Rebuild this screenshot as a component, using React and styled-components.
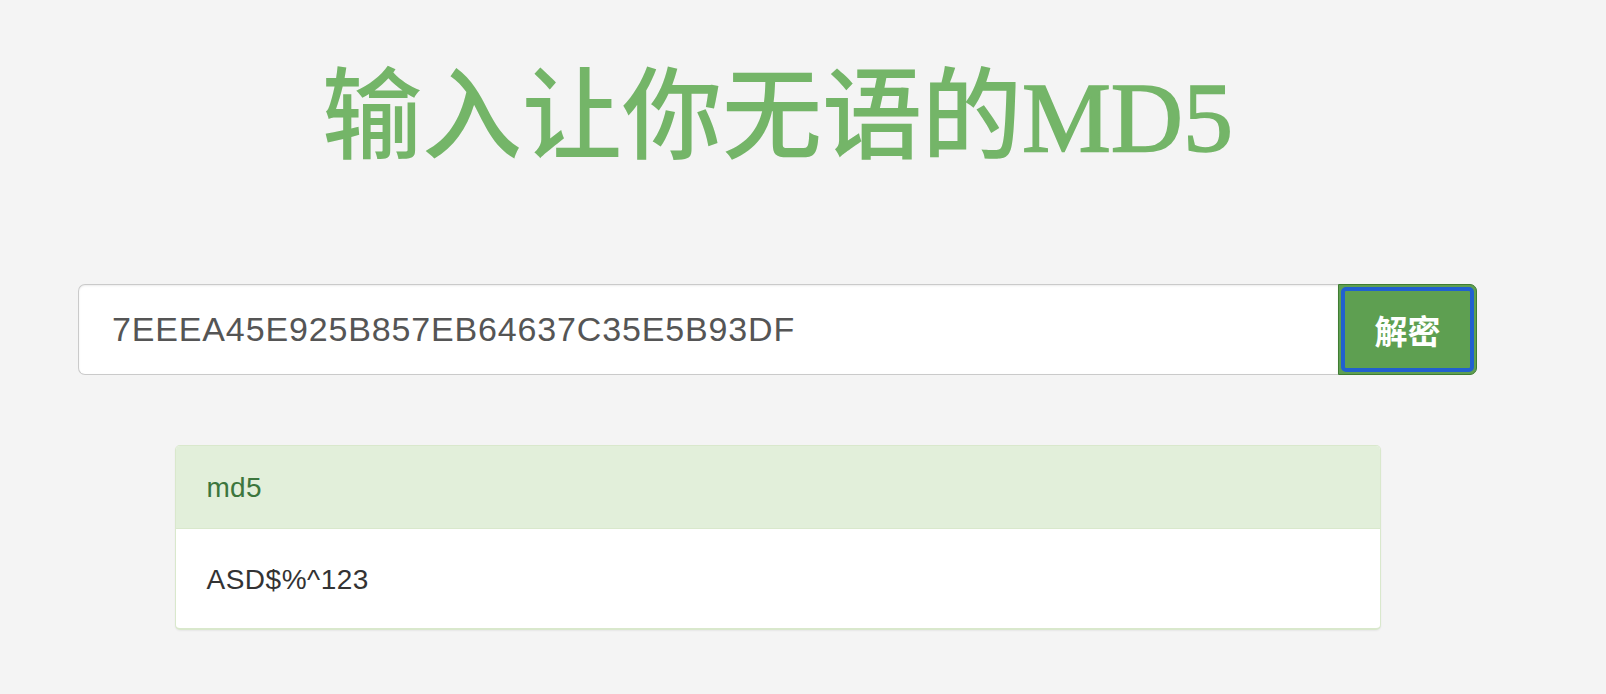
import { styled, createGlobalStyle } from 'styled-components';

const GlobalStyle = createGlobalStyle`
    html, body {
        margin: 0;
        padding: 0;
        background: #f4f4f4;
        min-height: 100%;
    }
    body {
        font-family: "Liberation Sans", Arial, "Noto Sans CJK SC", sans-serif;
    }
`;

const Page = styled.div`
    min-height: 694px;
    background: #f4f4f4;
    overflow: hidden;
`;

const Container = styled.div`
    width: 1399px;
    margin-left: 78px;
`;

const Title = styled.h1`
    margin: 0;
    padding-top: 68px;
    text-align: center;
    font-family: "Liberation Serif", "Noto Sans CJK SC", serif;
    font-size: 100px;
    line-height: 100px;
    font-weight: 500;
    color: #74b568;
`;

const TitleLatin = styled.span`
    -webkit-text-stroke: 1.6px currentColor;
`;

const SearchRow = styled.div`
    display: flex;
    margin-top: 116px;
    height: 91px;
`;

const Input = styled.input`
    flex: 1;
    min-width: 0;
    box-sizing: border-box;
    height: 100%;
    padding: 0 20px 0 33px;
    border: 1px solid #cacaca;
    border-right: none;
    border-radius: 7px 0 0 7px;
    background: #fff;
    box-shadow: inset 0 1px 2px rgba(0, 0, 0, 0.08);
    font-family: "Liberation Sans", Arial, sans-serif;
    font-size: 34px;
    letter-spacing: 0.85px;
    color: #555;
    outline: none;
`;

const Button = styled.button`
    position: relative;
    width: 139px;
    height: 100%;
    box-sizing: border-box;
    border: 1px solid #3f7c32;
    border-radius: 0 7px 7px 0;
    background: #5e9f51;
    color: #fff;
    font-family: "Noto Sans CJK SC", sans-serif;
    font-size: 33px;
    font-weight: 700;
    cursor: pointer;
    padding: 0;

    &::after {
        content: '';
        position: absolute;
        inset: 2px;
        border: 4px solid #2160cf;
        border-radius: 5px;
        pointer-events: none;
    }
`;

const Panel = styled.div`
    width: 1206px;
    margin: 70px auto 0;
    box-sizing: border-box;
    border: 1px solid #d9e8cc;
    border-bottom-width: 2px;
    border-radius: 5px;
    background: #fff;
    box-shadow: 0 1px 2px rgba(0, 0, 0, 0.06);
    overflow: hidden;
`;

const PanelHeading = styled.div`
    padding: 22px 31px 20px;
    line-height: 40px;
    font-size: 28px;
    letter-spacing: 0.3px;
    color: #3c763d;
    background: #e2efda;
    border-bottom: 1px solid #d9e8cc;
`;

const PanelBody = styled.div`
    padding: 31px 31px 28px;
    line-height: 40px;
    font-size: 28px;
    letter-spacing: 0.5px;
    color: #333;
`;

const App = () => {
    return (
        <Page>
            <GlobalStyle />
            <Container>
                <Title>
                    输入让你无语的<TitleLatin>MD5</TitleLatin>
                </Title>
                <SearchRow>
                    <Input defaultValue="7EEEA45E925B857EB64637C35E5B93DF" />
                    <Button>解密</Button>
                </SearchRow>
                <Panel>
                    <PanelHeading>md5</PanelHeading>
                    <PanelBody>ASD$%^123</PanelBody>
                </Panel>
            </Container>
        </Page>
    );
};

export default App;
